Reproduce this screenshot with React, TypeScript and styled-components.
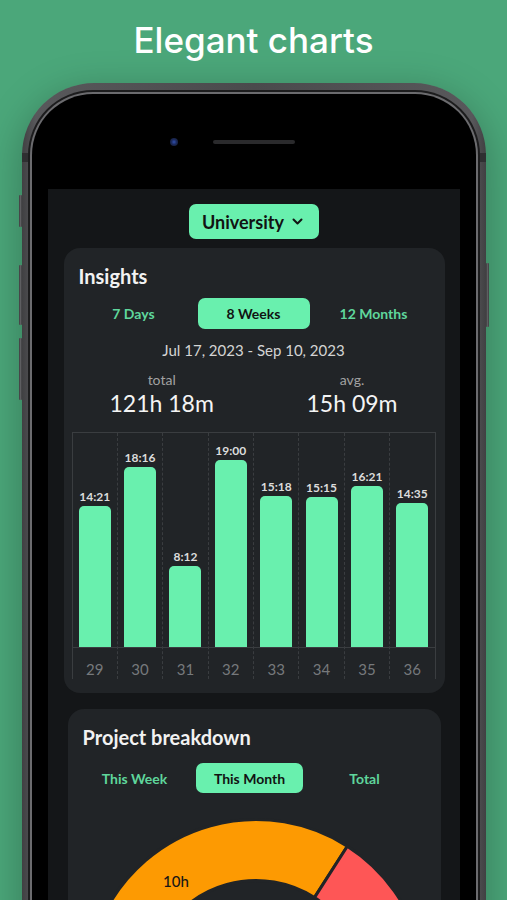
import React from "react"
import styled, { createGlobalStyle } from "styled-components"

//----------------------------------------------------------
//-- Palette
//----------------------------------------------------------
const MINT = "#69f0ae"
const MINT_DIM = "#5fd69c"
const SCREEN_BG = "#141618"
const CARD_BG = "#212427"
const GRID_LINE = "#3a3d40"

const GlobalStyle = createGlobalStyle`
  html, body {
    margin: 0;
    padding: 0;
    height: 100%;
    overflow: hidden;
    background: #4ba77a;
  }
  body {
    font-family: Lato, "Open Sans", sans-serif;
    -webkit-font-smoothing: antialiased;
  }
`

const Page = styled.div`
  width: 507px;
  height: 900px;
  overflow: hidden;
  display: flex;
  flex-direction: column;
  align-items: center;
  background: #4ba77a;
`

const Headline = styled.h1`
  margin: 19px 0 22px;
  font-family: Inter, "Open Sans", sans-serif;
  font-size: 35px;
  line-height: 42px;
  font-weight: 500;
  color: #ffffff;
`

//----------------------------------------------------------
//-- Phone body
//----------------------------------------------------------
const Phone = styled.div`
  position: relative;
  flex-shrink: 0;
  width: 464px;
`

const Frame = styled.div`
  padding: 7px 6px 0;
  border-radius: 72px 72px 0 0;
  background: linear-gradient(90deg, #404042 0%, #58585b 3%, #4a4a4c 50%, #58585b 97%, #404042 100%);
  box-shadow: 0 10px 40px rgba(0, 0, 0, 0.28);
`
const Groove = styled.div`
  padding: 2px 2px 0;
  border-radius: 65px 65px 0 0;
  background: #1c1c1d;
`
const Lip = styled.div`
  padding: 2px 2px 0;
  border-radius: 63px 63px 0 0;
  background: #6b6b6e;
`
const Bezel = styled.div`
  padding: 0 16px;
  border-radius: 61px 61px 0 0;
  background: #000000;
`

const SideButton = styled.div<{ $side: "left" | "right"; $top: number; $height: number }>`
  position: absolute;
  ${ (p) => p.$side }: -3px;
  top: ${ (p) => p.$top }px;
  width: 3px;
  height: ${ (p) => p.$height }px;
  border-radius: 1px;
  background: linear-gradient(90deg, #3a3a3c, #5e5e61, #3a3a3c);
`
const AntennaBand = styled.div<{ $side: "left" | "right" }>`
  position: absolute;
  ${ (p) => p.$side }: 0;
  top: 70px;
  width: 6px;
  height: 9px;
  background: #2f2f31;
`

const Notch = styled.div`
  height: 95px;
  display: grid;
  grid-template-columns: 1fr auto 1fr;
  align-items: center;
`
const Camera = styled.div`
  justify-self: end;
  margin-right: 35px;
  width: 8px;
  height: 8px;
  border-radius: 50%;
  background: radial-gradient(circle at 50% 50%, #3150b0 0%, #1b2a5c 45%, #141826 100%);
`
const Speaker = styled.div`
  width: 82px;
  height: 4px;
  border-radius: 2px;
  background: #2a2a2c;
`

//----------------------------------------------------------
//-- Screen
//----------------------------------------------------------
const Screen = styled.div`
  display: flex;
  flex-direction: column;
  padding: 15px 15px 40px 16px;
  background: ${ SCREEN_BG };
`

const ProjectSelect = styled.button`
  align-self: center;
  display: flex;
  align-items: center;
  gap: 8px;
  height: 35px;
  padding: 0 16px 0 13px;
  border: none;
  border-radius: 7px;
  background: ${ MINT };
  color: #111312;
  font-family: Lato, sans-serif;
  font-size: 18px;
  font-weight: 700;
`

const Card = styled.section<{ $inset?: number; $gap: number }>`
  margin: ${ (p) => p.$gap }px ${ (p) => p.$inset || 0 }px 0;
  padding: 16px 9px 14px 8px;
  border-radius: 16px;
  background: ${ CARD_BG };
`
const CardTitle = styled.h2`
  margin: 0;
  padding-left: 7px;
  font-size: 20px;
  line-height: 24px;
  font-weight: 700;
  color: #f2f2f2;
`

const Tabs = styled.div<{ $col: number; $shift?: number; $top: number }>`
  display: grid;
  grid-template-columns: repeat(3, ${ (p) => p.$col }px);
  justify-content: center;
  margin: ${ (p) => p.$top }px ${ (p) => p.$shift || 0 }px 0 0;
`
const Tab = styled.div<{ $active?: boolean; $height: number }>`
  display: flex;
  align-items: center;
  justify-content: center;
  height: ${ (p) => p.$height }px;
  margin: 0 4px;
  border-radius: 7px;
  font-size: 14px;
  font-weight: 700;
  color: ${ (p) => (p.$active ? "#111312" : MINT_DIM) };
  background: ${ (p) => (p.$active ? MINT : "transparent") };
`

const DateRange = styled.div`
  margin-top: 11px;
  text-align: center;
  font-size: 15px;
  line-height: 20px;
  color: #d4d4d4;
`

const Stats = styled.div`
  display: flex;
  justify-content: space-between;
  margin-top: 11px;
  padding: 0 38px;
`
const Stat = styled.div`
  text-align: center;
`
const StatLabel = styled.div`
  font-size: 14px;
  line-height: 18px;
  color: #a2a2a2;
`
const StatValue = styled.div`
  font-size: 23px;
  line-height: 28px;
  color: #f4f4f4;
`

//----------------------------------------------------------
//-- Bar chart
//----------------------------------------------------------
const Chart = styled.div`
  display: grid;
  grid-template-columns: repeat(8, 1fr);
  margin-top: 15px;
  border-top: 1px solid ${ GRID_LINE };
  border-left: 1px solid ${ GRID_LINE };
`
const ChartColumn = styled.div`
  display: flex;
  flex-direction: column;
  border-right: 1px dashed ${ GRID_LINE };
  &:last-child {
    border-right-style: solid;
  }
`
const BarArea = styled.div`
  height: 214px;
  display: flex;
  flex-direction: column;
  justify-content: flex-end;
  align-items: center;
  border-bottom: 1px solid ${ GRID_LINE };
`
const BarLabel = styled.div`
  margin-bottom: 2px;
  font-size: 12px;
  line-height: 14px;
  font-weight: 700;
  color: #dcdcdc;
`
const Bar = styled.div`
  width: 32px;
  border-radius: 5px 5px 0 0;
  background: ${ MINT };
`
const WeekLabel = styled.div`
  height: 31px;
  padding-top: 12px;
  box-sizing: border-box;
  text-align: center;
  font-size: 15px;
  line-height: 18px;
  color: #76797c;
`

//----------------------------------------------------------
//-- Donut
//----------------------------------------------------------
const Donut = styled.svg`
  display: block;
  margin: 16px auto 0;
`

const weeks = [
  { week: 29, time: "14:21" },
  { week: 30, time: "18:16" },
  { week: 31, time: "8:12" },
  { week: 32, time: "19:00" },
  { week: 33, time: "15:18" },
  { week: 34, time: "15:15" },
  { week: 35, time: "16:21" },
  { week: 36, time: "14:35" },
]
const PX_PER_MINUTE = 187 / (19 * 60)

const toMinutes = (t: string) =>
{
  const [h, m] = t.split(":").map(Number)
  return h * 60 + m
}

// ring segment, angles in degrees clockwise from 12 o'clock
const segment = (cx: number, cy: number, R: number, r: number, a0: number, a1: number) =>
{
  const pt = (a: number, rad: number) =>
  {
    const t = (a * Math.PI) / 180
    return `${ (cx + rad * Math.sin(t)).toFixed(2) } ${ (cy - rad * Math.cos(t)).toFixed(2) }`
  }
  const large = a1 - a0 > 180 ? 1 : 0
  return `M ${ pt(a0, R) } A ${ R } ${ R } 0 ${ large } 1 ${ pt(a1, R) } L ${ pt(a1, r) } A ${ r } ${ r } 0 ${ large } 0 ${ pt(a0, r) } Z`
}

const slices = [
  { from: -160, to: 32.6, color: "#fd9a02" },
  { from: 32.6, to: 125, color: "#fe5656" },
  { from: 125, to: 200, color: "#4aa3ff" },
]

export default function App()
{
  return (
    <Page>
      <GlobalStyle />
      <Headline>Elegant charts</Headline>
      <Phone>
        <SideButton $side="left" $top={112} $height={32} />
        <SideButton $side="left" $top={182} $height={60} />
        <SideButton $side="left" $top={255} $height={62} />
        <SideButton $side="right" $top={180} $height={64} />
        <Frame>
          <Groove>
            <Lip>
              <Bezel>
                <Notch>
                  <Camera />
                  <Speaker />
                  <div />
                </Notch>
                <Screen>
                  <ProjectSelect>
                    University
                    <svg width="11" height="7" viewBox="0 0 11 7">
                      <path d="M1.5 1.5 L5.5 5.5 L9.5 1.5" fill="none" stroke="#111312" strokeWidth="2" strokeLinecap="round" strokeLinejoin="round" />
                    </svg>
                  </ProjectSelect>

                  <Card $gap={9}>
                    <CardTitle>Insights</CardTitle>
                    <Tabs $col={120} $top={10}>
                      <Tab $height={31}>7 Days</Tab>
                      <Tab $height={31} $active>8 Weeks</Tab>
                      <Tab $height={31}>12 Months</Tab>
                    </Tabs>
                    <DateRange>Jul 17, 2023 - Sep 10, 2023</DateRange>
                    <Stats>
                      <Stat>
                        <StatLabel>total</StatLabel>
                        <StatValue>121h 18m</StatValue>
                      </Stat>
                      <Stat>
                        <StatLabel>avg.</StatLabel>
                        <StatValue>15h 09m</StatValue>
                      </Stat>
                    </Stats>
                    <Chart>
                      {weeks.map((w) => (
                        <ChartColumn key={w.week}>
                          <BarArea>
                            <BarLabel>{w.time}</BarLabel>
                            <Bar style={{ height: Math.round(toMinutes(w.time) * PX_PER_MINUTE) }} />
                          </BarArea>
                          <WeekLabel>{w.week}</WeekLabel>
                        </ChartColumn>
                      ))}
                    </Chart>
                  </Card>

                  <Card $gap={16} $inset={4}>
                    <CardTitle>Project breakdown</CardTitle>
                    <Tabs $col={115} $shift={8} $top={14}>
                      <Tab $height={30}>This Week</Tab>
                      <Tab $height={30} $active>This Month</Tab>
                      <Tab $height={30}>Total</Tab>
                    </Tabs>
                    <Donut width="360" height="360" viewBox="0 0 360 360">
                      {slices.map((s) => (
                        <path
                          key={s.color}
                          d={segment(180, 180, 169.5, 108.5, s.from, s.to)}
                          fill={s.color}
                          stroke={CARD_BG}
                          strokeWidth="3"
                        />
                      ))}
                      <text x="87" y="78" fontFamily="Lato, sans-serif" fontSize="15" fontWeight="500" fill="#161616">
                        10h
                      </text>
                    </Donut>
                  </Card>
                </Screen>
              </Bezel>
            </Lip>
          </Groove>
        </Frame>
        <AntennaBand $side="left" />
        <AntennaBand $side="right" />
      </Phone>
    </Page>
  )
}
